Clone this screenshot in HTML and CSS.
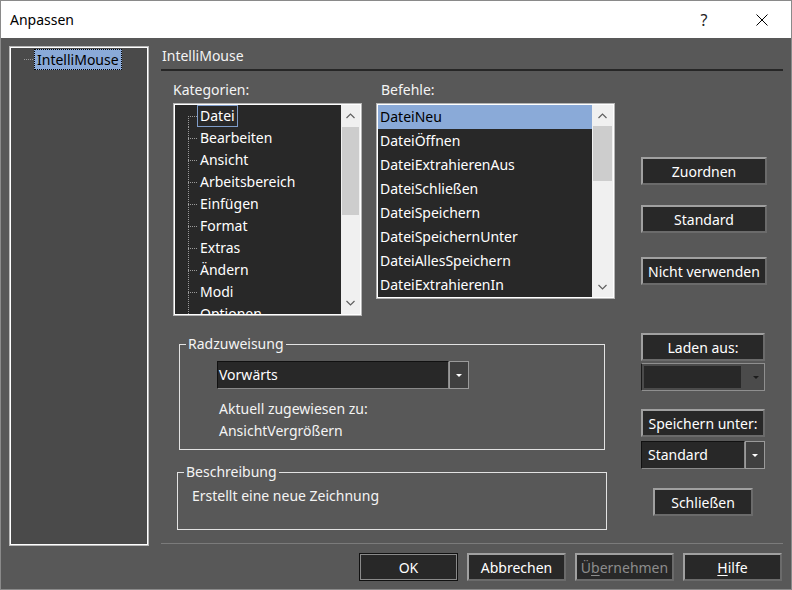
FILE: index.html
```html
<!DOCTYPE html>
<html lang="de">
<head>
  <meta charset="UTF-8">
  <title>Anpassen</title>
  <link rel="stylesheet" href="styles.css">
</head>
<body>
  <div class="window">
    <div class="titlebar">
      <span class="title">Anpassen</span>
      <span class="tb-btn help">?</span>
      <span class="tb-btn">
        <svg width="12" height="12" viewBox="0 0 12 12"><path d="M0.5 0.5 L11.5 11.5 M11.5 0.5 L0.5 11.5" stroke="#000" stroke-width="1" fill="none"/></svg>
      </span>
    </div>

    <div class="client">
      <!-- device tree -->
      <div class="tree-panel">
        <div class="tree-root"><span class="stub"></span><span class="tree-sel">IntelliMouse</span></div>
      </div>

      <div class="main">
        <div class="heading">IntelliMouse</div>
        <div class="rule"></div>

        <div class="content">
          <div class="left-col">
            <div class="lists">
              <div class="cat">
                <div class="label">Kategorien:</div>
                <div class="listbox">
                  <div class="items tree-rows">
                    <div class="trow"><span class="tlabel focus">Datei</span></div>
                    <div class="trow"><span class="tlabel">Bearbeiten</span></div>
                    <div class="trow"><span class="tlabel">Ansicht</span></div>
                    <div class="trow"><span class="tlabel">Arbeitsbereich</span></div>
                    <div class="trow"><span class="tlabel">Einfügen</span></div>
                    <div class="trow"><span class="tlabel">Format</span></div>
                    <div class="trow"><span class="tlabel">Extras</span></div>
                    <div class="trow"><span class="tlabel">Ändern</span></div>
                    <div class="trow"><span class="tlabel">Modi</span></div>
                    <div class="trow"><span class="tlabel">Optionen</span></div>
                  </div>
                  <div class="scrollbar sb-cat">
                    <div class="sb-arrow"><svg width="9" height="6" viewBox="0 0 9 6"><polyline points="0.5,5 4.5,1 8.5,5" fill="none" stroke="#606060" stroke-width="1.2"/></svg></div>
                    <div class="sb-thumb"></div>
                    <div class="sb-track"></div>
                    <div class="sb-arrow"><svg width="9" height="6" viewBox="0 0 9 6"><polyline points="0.5,1 4.5,5 8.5,1" fill="none" stroke="#606060" stroke-width="1.2"/></svg></div>
                  </div>
                </div>
              </div>

              <div class="cmd">
                <div class="label">Befehle:</div>
                <div class="listbox">
                  <div class="items">
                    <div class="crow sel">DateiNeu</div>
                    <div class="crow">DateiÖffnen</div>
                    <div class="crow">DateiExtrahierenAus</div>
                    <div class="crow">DateiSchließen</div>
                    <div class="crow">DateiSpeichern</div>
                    <div class="crow">DateiSpeichernUnter</div>
                    <div class="crow">DateiAllesSpeichern</div>
                    <div class="crow">DateiExtrahierenIn</div>
                  </div>
                  <div class="scrollbar sb-cmd">
                    <div class="sb-arrow"><svg width="9" height="6" viewBox="0 0 9 6"><polyline points="0.5,5 4.5,1 8.5,5" fill="none" stroke="#606060" stroke-width="1.2"/></svg></div>
                    <div class="sb-thumb"></div>
                    <div class="sb-track"></div>
                    <div class="sb-arrow"><svg width="9" height="6" viewBox="0 0 9 6"><polyline points="0.5,1 4.5,5 8.5,1" fill="none" stroke="#606060" stroke-width="1.2"/></svg></div>
                  </div>
                </div>
              </div>
            </div>

            <fieldset class="group rad">
              <legend>Radzuweisung</legend>
              <div class="combo rad-combo">
                <div class="combo-field">Vorwärts</div>
                <div class="combo-arrow"><span class="tri"></span></div>
              </div>
              <div class="rad-text">Aktuell zugewiesen zu:</div>
              <div class="rad-text second">AnsichtVergrößern</div>
            </fieldset>

            <fieldset class="group desc">
              <legend>Beschreibung</legend>
              <div class="desc-text">Erstellt eine neue Zeichnung</div>
            </fieldset>
          </div>

          <div class="side">
            <div class="btn wide">Zuordnen</div>
            <div class="btn wide gap-20">Standard</div>
            <div class="btn wide gap-24">Nicht verwenden</div>
            <div class="btn narrow gap-48">Laden aus:</div>
            <div class="combo load-combo">
              <div class="load-field"></div>
              <div class="load-arrow"><span class="tri dark"></span></div>
            </div>
            <div class="btn narrow gap-18">Speichern unter:</div>
            <div class="combo save-combo">
              <div class="combo-field">Standard</div>
              <div class="combo-arrow"><span class="tri"></span></div>
            </div>
            <div class="btn close-btn">Schließen</div>
          </div>
        </div>

        <div class="rule2"></div>
        <div class="footer">
          <div class="btn foot default">OK</div>
          <div class="btn foot">Abbrechen</div>
          <div class="btn foot disabled">Ü<u>b</u>ernehmen</div>
          <div class="btn foot"><u>H</u>ilfe</div>
        </div>
      </div>
    </div>
  </div>
</body>
</html>
```

FILE: styles.css
```css
* {
  box-sizing: border-box;
}
body {
  margin: 0;
  background: #585858;
  font-family: "Noto Sans", sans-serif;
  font-size: 14px;
  color: #f4f4f4;
}
.window {
  width: 792px;
  height: 590px;
  border: 1px solid #8a8a8a;
  background: #585858;
  display: flex;
  flex-direction: column;
}

/* title bar */
.titlebar {
  height: 37px;
  flex: none;
  background: #fff;
  color: #000;
  display: flex;
  align-items: center;
}
.title {
  flex: 1;
  padding-left: 9px;
  line-height: 37px;
}
.tb-btn {
  width: 58px;
  height: 37px;
  display: flex;
  align-items: center;
  justify-content: center;
}
.help {
  font-size: 16px;
  color: #222;
}

.client {
  display: flex;
  flex: 1;
}

/* left tree */
.tree-panel {
  width: 140px;
  height: 500px;
  margin: 8px 0 0 8px;
  border: 1px solid #b9b9b9;
  box-shadow: inset 0 0 0 1px #fff;
  background: #4a4a4a;
  padding: 2px 0 0 14px;
}
.tree-root {
  display: flex;
  align-items: center;
}
.stub {
  width: 9px;
  height: 1px;
  margin-right: 1px;
  background: repeating-linear-gradient(to right, #9a9a9a 0 1px, transparent 1px 2px);
}
.tree-sel {
  background: #8aaad8;
  color: #000;
  border: 1px dotted #000;
  padding: 0 2px;
  line-height: 19px;
}

/* right part */
.main {
  width: 622px;
  margin-left: 12px;
}
.heading {
  margin-top: 8px;
  line-height: 20px;
  padding-left: 1px;
}
.rule {
  height: 2px;
  margin-top: 3px;
  background: #262626;
}
.content {
  display: flex;
  height: 472px;
}
.left-col {
  width: 480px;
  padding-top: 9px;
}
.lists {
  display: flex;
  align-items: flex-start;
}
.cat {
  margin-left: 12px;
}
.cmd {
  margin-left: 14px;
}
.label {
  line-height: 20px;
}
.cmd .label {
  padding-left: 5px;
}
.listbox {
  margin-top: 3px;
  border: 1px solid #b5b5b5;
  box-shadow: inset 0 0 0 1px #fff;
  padding: 1px;
  background: #282828;
  display: flex;
  overflow: hidden;
}
.cat .listbox {
  width: 189px;
  height: 213px;
}
.cmd .listbox {
  width: 239px;
  height: 196px;
}
.items {
  flex: 1;
  overflow: hidden;
  color: #fff;
}

/* tree rows with dotted connectors */
.tree-rows {
  padding-left: 13px;
}
.trow {
  height: 22px;
  padding-left: 9px;
  background-image:
    repeating-linear-gradient(to bottom, #9a9a9a 0 1px, transparent 1px 2px),
    repeating-linear-gradient(to right, #9a9a9a 0 1px, transparent 1px 2px);
  background-size: 1px 100%, 9px 1px;
  background-position: 0 0, 0 11px;
  background-repeat: no-repeat;
}
.trow:first-child {
  background-size: 1px 11px, 9px 1px;
  background-position: 0 11px, 0 11px;
}
.tlabel {
  display: inline-block;
  border: 1px solid transparent;
  padding: 0 2px;
  line-height: 20px;
  white-space: nowrap;
}
.tlabel.focus {
  border-color: #7f9cc8;
}

.crow {
  height: 24px;
  line-height: 24px;
  padding-left: 2px;
  white-space: nowrap;
}
.crow.sel {
  background: #8aaad8;
  color: #000;
}

/* scrollbars */
.scrollbar {
  background: #f0f0f0;
  display: flex;
  flex-direction: column;
}
.sb-cat {
  width: 19px;
}
.sb-cmd {
  width: 21px;
}
.sb-arrow {
  height: 22px;
  display: flex;
  align-items: center;
  justify-content: center;
}
.sb-cmd .sb-arrow {
  height: 21px;
}
.sb-thumb {
  background: #cdcdcd;
  height: 88px;
  margin: 0 1px;
}
.sb-cmd .sb-thumb {
  height: 55px;
}
.sb-track {
  flex: 1;
}

/* group boxes */
.group {
  border: 1px solid #e2e2e2;
  margin: 0;
  padding: 0;
  min-width: 0;
}
.group legend {
  padding: 0 2px;
  margin-left: 6px;
  line-height: 18px;
}
.rad {
  margin: 19px 0 0 18px;
  width: 426px;
  padding-bottom: 7px;
}
.desc {
  margin: 13px 0 0 16px;
  width: 430px;
  padding-bottom: 22px;
}
.rad-text {
  margin: 9px 0 0 39px;
  line-height: 22px;
}
.rad-text.second {
  margin-top: 0;
}
.desc-text {
  margin: 4px 0 0 14px;
  line-height: 22px;
}

/* combo boxes */
.combo {
  display: flex;
  height: 28px;
}
.rad-combo {
  width: 252px;
  margin: 8px 0 0 37px;
}
.combo-field {
  flex: 1;
  background: #282828;
  border: 1px solid;
  border-color: #111 #8a8a8a #8a8a8a #111;
  padding-left: 1px;
  line-height: 26px;
  color: #fff;
}
.combo-arrow {
  width: 20px;
  background: #404040;
  border: 1px solid #9a9a9a;
  display: flex;
  align-items: center;
  justify-content: center;
}
.tri {
  width: 0;
  height: 0;
  border-left: 3px solid transparent;
  border-right: 3px solid transparent;
  border-top: 3px solid #fff;
}
.tri.dark {
  border-top-color: #1c1c1c;
}
.load-combo {
  width: 124px;
  margin-top: 2px;
  background: #4b4b4b;
  border: 1px solid #8f8f8f;
  border-left-color: #1a1a1a;
  padding: 2px 0 2px 2px;
}
.load-field {
  width: 97px;
  background: #282828;
}
.load-arrow {
  flex: 1;
  display: flex;
  align-items: center;
  justify-content: center;
  padding-left: 6px;
}
.save-combo {
  width: 124px;
  margin-top: 4px;
}
.save-combo .combo-field {
  padding-left: 6px;
}

/* buttons */
.side {
  width: 142px;
  padding-top: 86px;
  display: flex;
  flex-direction: column;
  align-items: flex-start;
}
.btn {
  height: 28px;
  background: #282828;
  border: 2px solid;
  border-color: #a0a0a0 #6b6b6b #6b6b6b #a0a0a0;
  color: #fff;
  display: flex;
  align-items: center;
  justify-content: center;
  white-space: nowrap;
}
.btn.wide {
  width: 126px;
}
.btn.narrow {
  width: 124px;
}
.gap-18 { margin-top: 18px; }
.gap-20 { margin-top: 20px; }
.gap-24 { margin-top: 24px; }
.gap-48 { margin-top: 48px; }
.close-btn {
  width: 100px;
  margin: 19px 0 0 12px;
}

.rule2 {
  height: 1px;
  background: #7b7b7b;
}
.footer {
  display: flex;
  justify-content: flex-end;
  gap: 9px;
  padding: 9px 1px 0 0;
}
.btn.foot {
  width: 99px;
}
.btn.default {
  border: 1px solid #111;
  box-shadow: inset 0 0 0 1px #8a8a8a;
}
.btn.disabled {
  color: #8c8c8c;
}
.btn u {
  text-underline-offset: 2px;
}
```
